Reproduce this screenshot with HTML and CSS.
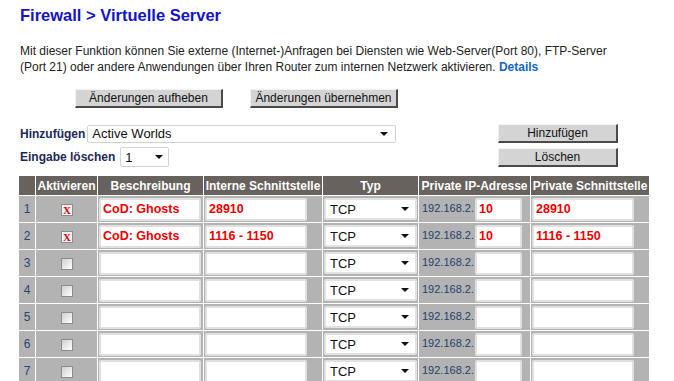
FILE: index.html
```html
<!DOCTYPE html>
<html lang="de">
<head>
    <meta charset="UTF-8">
    <title>Firewall &gt; Virtuelle Server</title>
    <link rel="stylesheet" href="styles.css">
</head>
<body>
    <div class="page">
        <h1>Firewall &gt; Virtuelle Server</h1>
        <p class="intro">Mit dieser Funktion können Sie externe (Internet-)Anfragen bei Diensten wie Web-Server(Port 80), FTP-Server<br>(Port 21) oder andere Anwendungen über Ihren Router zum internen Netzwerk aktivieren. <a href="#" class="details">Details</a></p>

        <div class="actions">
            <button class="btn btn-wide">Änderungen aufheben</button>
            <button class="btn btn-wide">Änderungen übernehmen</button>
        </div>

        <div class="form-row">
            <label class="lbl">Hinzufügen</label>
            <span class="sel sel-app"><select><option>Active Worlds</option></select></span>
            <button class="btn btn-side">Hinzufügen</button>
        </div>
        <div class="form-row row-del">
            <label class="lbl">Eingabe löschen</label>
            <span class="sel sel-num"><select><option>1</option></select></span>
            <button class="btn btn-side">Löschen</button>
        </div>

        <table class="vs">
            <colgroup>
                <col class="c-nr"><col class="c-act"><col class="c-desc"><col class="c-port">
                <col class="c-type"><col class="c-ip"><col class="c-port">
            </colgroup>
            <thead>
                <tr>
                    <th></th>
                    <th>Aktivieren</th>
                    <th>Beschreibung</th>
                    <th>Interne Schnittstelle</th>
                    <th>Typ</th>
                    <th>Private IP-Adresse</th>
                    <th>Private Schnittstelle</th>
                </tr>
            </thead>
            <tbody>
                <tr>
                    <td class="nr">1</td>
                    <td class="act"><span class="chk on">X</span></td>
                    <td><input class="txt val" value="CoD: Ghosts"></td>
                    <td><input class="txt val" value="28910"></td>
                    <td><span class="sel sel-type"><select><option>TCP</option></select></span></td>
                    <td class="ip">192.168.2.<input class="txt ip-last val" value="10"></td>
                    <td><input class="txt val" value="28910"></td>
                </tr>
                <tr>
                    <td class="nr">2</td>
                    <td class="act"><span class="chk on">X</span></td>
                    <td><input class="txt val" value="CoD: Ghosts"></td>
                    <td><input class="txt val" value="1116 - 1150"></td>
                    <td><span class="sel sel-type"><select><option>TCP</option></select></span></td>
                    <td class="ip">192.168.2.<input class="txt ip-last val" value="10"></td>
                    <td><input class="txt val" value="1116 - 1150"></td>
                </tr>
                <tr>
                    <td class="nr">3</td>
                    <td class="act"><span class="chk"></span></td>
                    <td><input class="txt"></td>
                    <td><input class="txt"></td>
                    <td><span class="sel sel-type"><select><option>TCP</option></select></span></td>
                    <td class="ip">192.168.2.<input class="txt ip-last"></td>
                    <td><input class="txt"></td>
                </tr>
                <tr>
                    <td class="nr">4</td>
                    <td class="act"><span class="chk"></span></td>
                    <td><input class="txt"></td>
                    <td><input class="txt"></td>
                    <td><span class="sel sel-type"><select><option>TCP</option></select></span></td>
                    <td class="ip">192.168.2.<input class="txt ip-last"></td>
                    <td><input class="txt"></td>
                </tr>
                <tr>
                    <td class="nr">5</td>
                    <td class="act"><span class="chk"></span></td>
                    <td><input class="txt"></td>
                    <td><input class="txt"></td>
                    <td><span class="sel sel-type"><select><option>TCP</option></select></span></td>
                    <td class="ip">192.168.2.<input class="txt ip-last"></td>
                    <td><input class="txt"></td>
                </tr>
                <tr>
                    <td class="nr">6</td>
                    <td class="act"><span class="chk"></span></td>
                    <td><input class="txt"></td>
                    <td><input class="txt"></td>
                    <td><span class="sel sel-type"><select><option>TCP</option></select></span></td>
                    <td class="ip">192.168.2.<input class="txt ip-last"></td>
                    <td><input class="txt"></td>
                </tr>
                <tr>
                    <td class="nr">7</td>
                    <td class="act"><span class="chk"></span></td>
                    <td><input class="txt"></td>
                    <td><input class="txt"></td>
                    <td><span class="sel sel-type"><select><option>TCP</option></select></span></td>
                    <td class="ip">192.168.2.<input class="txt ip-last"></td>
                    <td><input class="txt"></td>
                </tr>
            </tbody>
        </table>
    </div>
</body>
</html>
```

FILE: styles.css
```css
* {
    box-sizing: border-box;
}
html, body {
    overflow: hidden;
}
body {
    margin: 0;
    background: #ffffff;
    font-family: "Liberation Sans", Arial, sans-serif;
    font-size: 12px;
    color: #222;
}
.page {
    padding: 6px 0 0 20px;
}
h1 {
    margin: 0;
    font-size: 16.5px;
    line-height: 19px;
    color: #1414c8;
}
.intro {
    margin: 18px 0 0;
    line-height: 16px;
    color: #222;
}
.details {
    color: #1166cc;
    font-weight: bold;
    text-decoration: none;
}

/* buttons */
.btn {
    height: 19px;
    padding: 0;
    font-family: inherit;
    font-size: 12px;
    color: #111;
    background: #d4d4d4;
    border: 1px solid;
    border-color: #f2f2f2 #4a4a4a #4a4a4a #f2f2f2;
    border-right-width: 2px;
    border-bottom-width: 2px;
    border-radius: 0;
}
.actions {
    display: flex;
    gap: 27px;
    margin: 14px 0 0 55px;
}
.btn-wide {
    width: 148px;
}
.btn-side {
    width: 120px;
    margin-left: auto;
}

/* form rows */
.form-row {
    display: flex;
    align-items: center;
    width: 598px;
    margin-top: 16px;
}
.form-row.row-del {
    margin-top: 4px;
}
.lbl {
    font-weight: bold;
    color: #1b2a55;
    margin-right: 2px;
}
.row-del .lbl {
    margin-right: 5px;
}
.sel {
    position: relative;
    display: inline-block;
}
.sel select {
    appearance: none;
    width: 100%;
    height: 100%;
    margin: 0;
    padding: 0 0 0 4px;
    font-family: inherit;
    font-size: 13px;
    color: #111;
    background: #fff;
    border: 1px solid #d2d2d2;
    border-radius: 2px;
}
.sel::after {
    content: "";
    position: absolute;
    right: 8px;
    top: 50%;
    margin-top: -2px;
    border-left: 4px solid transparent;
    border-right: 4px solid transparent;
    border-top: 4px solid #111;
    pointer-events: none;
}
.sel-app {
    width: 309px;
    height: 18px;
}
.sel-num {
    width: 49px;
    height: 20px;
}
.sel-num::after {
    right: 6px;
}
.sel-type {
    width: 93px;
    height: 22px;
    vertical-align: middle;
}
.sel-type select {
    border: 2px solid #e2e2e2;
}

/* table */
.vs {
    margin: 8px 0 0 -2px;
    border-collapse: separate;
    border-spacing: 1px;
    table-layout: fixed;
    width: 632px;
}
.c-nr { width: 16px; }
.c-act { width: 61px; }
.c-desc { width: 105px; }
.c-port { width: 118px; }
.c-type { width: 95px; }
.c-ip { width: 111px; }
.vs th {
    height: 19px;
    padding: 0;
    background: #67625e;
    color: #fff;
    font-weight: bold;
    font-size: 12px;
    white-space: nowrap;
    text-align: center;
}
.vs td {
    height: 26px;
    padding: 0 0 0 1px;
    background: #b3b3b3;
    vertical-align: middle;
    white-space: nowrap;
}
.vs td.nr {
    padding: 0;
    text-align: center;
    color: #2a4570;
}
.vs td.act {
    text-align: center;
}
.vs td.ip {
    padding-left: 3px;
    font-size: 11px;
    color: #25406a;
}
.txt {
    width: 102px;
    height: 23px;
    margin: 0;
    padding: 0 0 0 2px;
    font-family: inherit;
    font-size: 12.5px;
    font-weight: bold;
    color: #ee0000;
    background: #fff;
    border: 2px solid #e0e0e0;
    border-radius: 2px;
    vertical-align: middle;
}
.txt.ip-last {
    width: 47px;
    margin-left: 1px;
    padding-left: 2px;
}
.chk {
    display: inline-block;
    width: 12px;
    height: 12px;
    border: 1px solid #8c8c8c;
    background: linear-gradient(135deg, #cfcfcf, #ffffff);
    vertical-align: middle;
    font-size: 11px;
    line-height: 10px;
    font-family: "Liberation Serif", serif;
    font-weight: bold;
    color: #e00000;
    text-align: center;
}
.chk.on {
    background: #f4f4f4;
}
```
